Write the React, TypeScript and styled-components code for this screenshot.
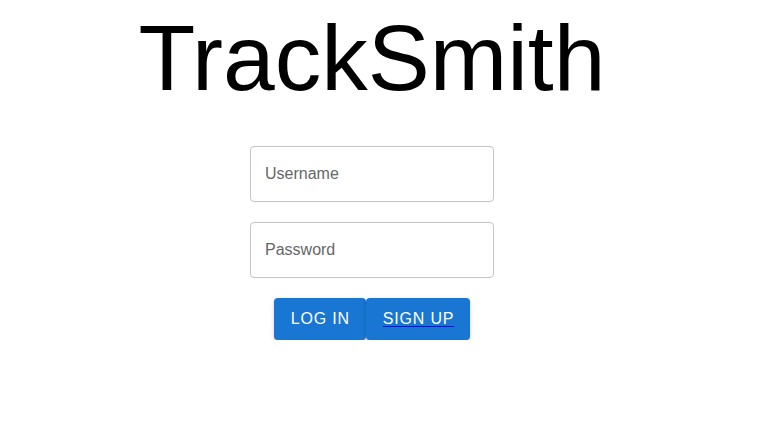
import styled, {createGlobalStyle} from "styled-components";

const GlobalStyle = createGlobalStyle`
  body {
    margin: 0;
    background: #fff;
    font-family: "Liberation Sans", Arial, sans-serif;
  }
`

const Page = styled.div`
  width: 744px;
  display: flex;
  flex-direction: column;
  align-items: center;
`

const Title = styled.h1`
  margin: 3px 0 0;
  font-family: "Liberation Sans", Arial, sans-serif;
  font-weight: 400;
  font-size: 93px;
  line-height: 110px;
  color: #000;
`

const Form = styled.form`
  margin-top: 33px;
  display: flex;
  flex-direction: column;
  align-items: center;
  gap: 20px;
`

const Field = styled.input`
  box-sizing: border-box;
  width: 244px;
  height: 56px;
  padding: 0 14px;
  border: 1px solid #c4c4c4;
  border-radius: 4px;
  font-family: "Liberation Sans", Arial, sans-serif;
  font-size: 16px;
  color: #222;
  outline: none;

  &::placeholder {
    color: #666;
  }
`

const Actions = styled.div`
  display: flex;
`

const Button = styled.button<{ $link?: boolean }>`
  height: 42px;
  padding: 0 16px 0 17px;
  border: none;
  border-radius: 4px;
  background: #1976d2;
  color: #fff;
  font-family: "Liberation Sans", Arial, sans-serif;
  font-size: 16px;
  letter-spacing: 0.8px;
  text-transform: uppercase;
  box-shadow: 0 3px 1px -2px rgba(0,0,0,0.2), 0 2px 2px 0 rgba(0,0,0,0.14), 0 1px 5px 0 rgba(0,0,0,0.12);
  cursor: pointer;
  text-decoration: ${p => p.$link ? 'underline' : 'none'};
  text-decoration-color: #0a0ad8;
  text-underline-offset: 2px;
`

export default function App() {
  return (
    <Page>
      <GlobalStyle />
      <Title>TrackSmith</Title>
      <Form onSubmit={e => e.preventDefault()}>
        <Field placeholder="Username" />
        <Field placeholder="Password" type="password" />
        <Actions>
          <Button type="submit">Log in</Button>
          <Button type="button" $link>Sign up</Button>
        </Actions>
      </Form>
    </Page>
  );
}
